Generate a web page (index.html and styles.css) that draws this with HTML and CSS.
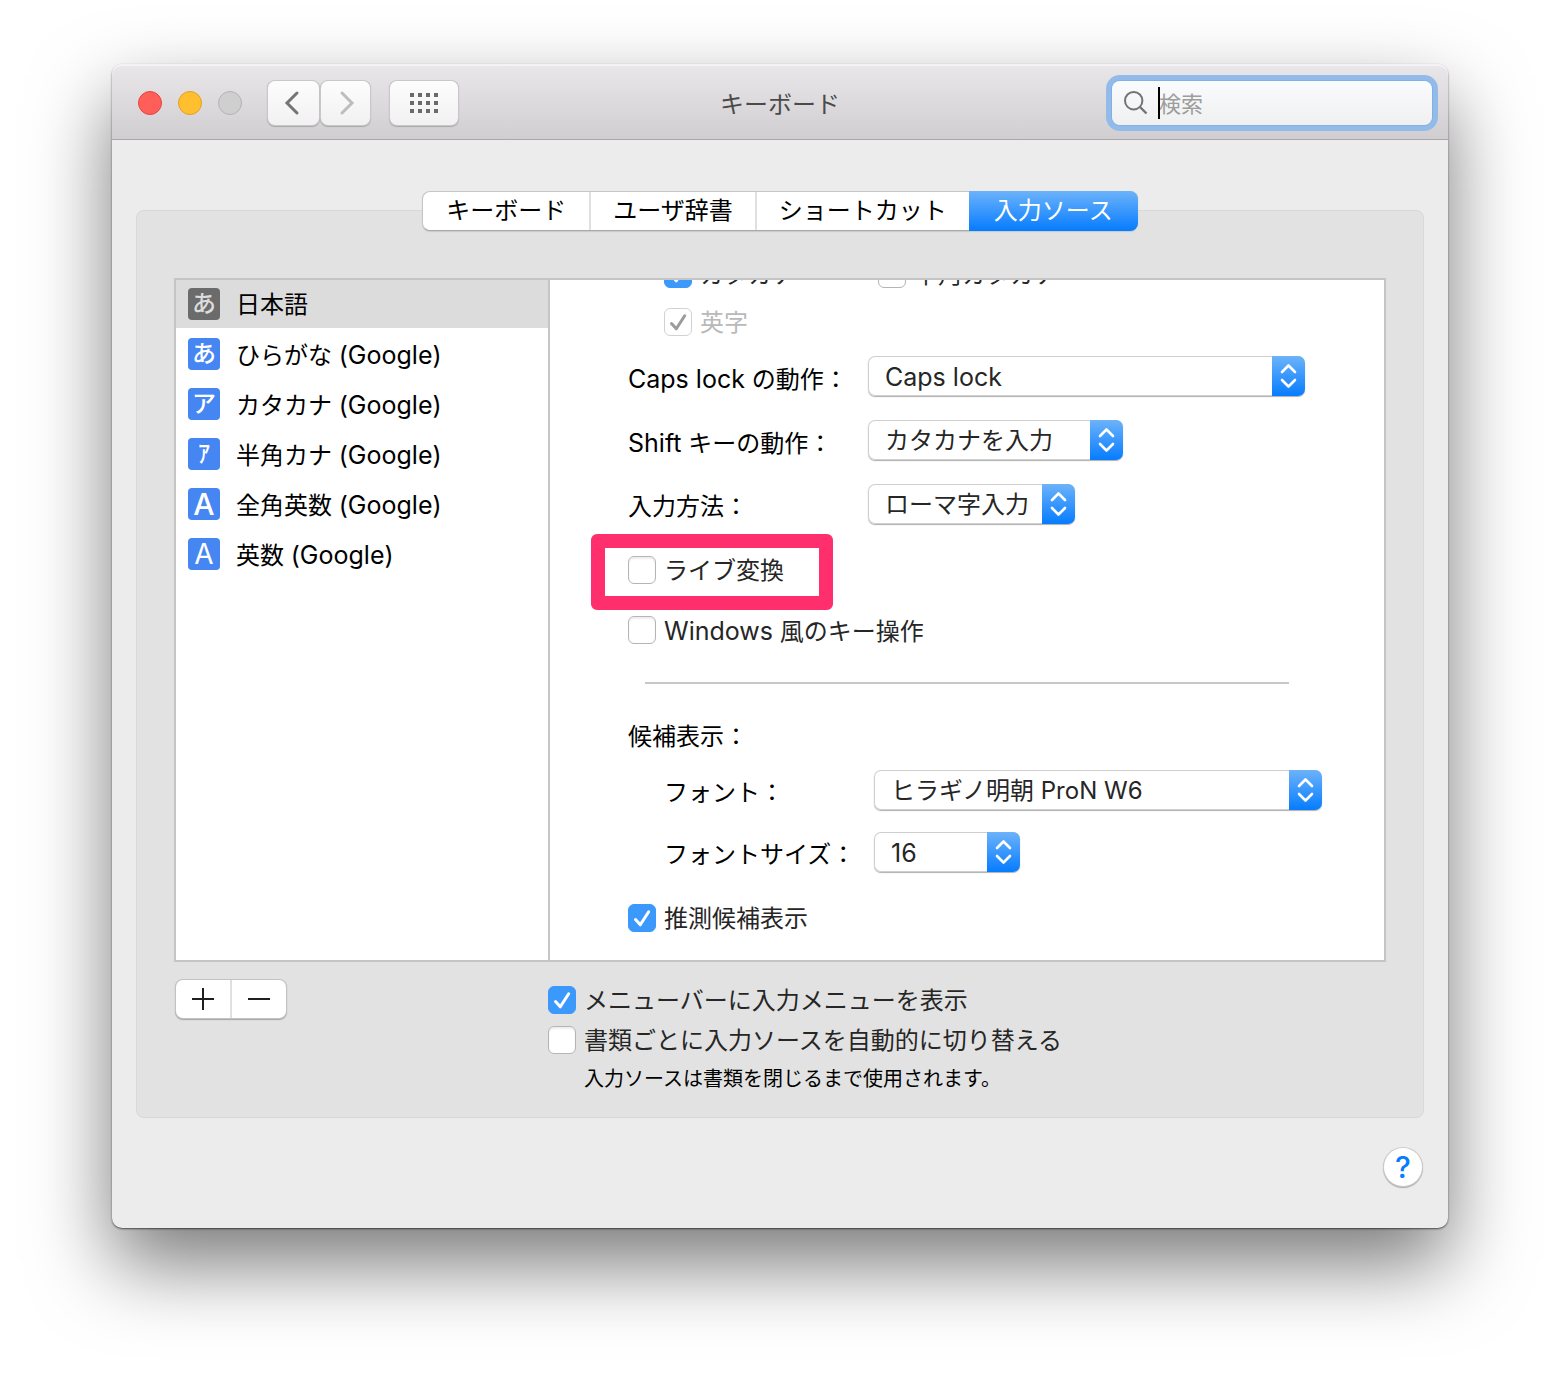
FILE: index.html
```html
<!DOCTYPE html>
<html lang="ja">
<head>
  <meta charset="UTF-8">
  <meta name="viewport" content="width=device-width, initial-scale=1.0">
  <title>キーボード</title>
  <link rel="stylesheet" href="styles.css">
</head>
<body>
  <svg class="defs" aria-hidden="true">
    <symbol id="tick" viewBox="0 0 28 28">
      <path d="M7.5 15.5 L12.3 20.8 L20.7 7.8" fill="none" stroke="currentColor" stroke-width="3" stroke-linecap="round" stroke-linejoin="round"/>
    </symbol>
    <symbol id="updown" viewBox="0 0 33 40">
      <path d="M10 16 L16.5 9.5 L23 16 M10 24 L16.5 30.5 L23 24" fill="none" stroke="currentColor" stroke-width="2.6" stroke-linecap="round" stroke-linejoin="round"/>
    </symbol>
  </svg>

  <div class="window">
    <header class="titlebar">
      <div class="tools">
        <div class="lights">
          <button class="light red" aria-label="閉じる"></button>
          <button class="light yellow" aria-label="しまう"></button>
          <button class="light gray" aria-label="拡大" disabled></button>
        </div>
        <div class="nav">
          <button class="tool back" aria-label="戻る">
            <svg width="16" height="26" viewBox="0 0 16 26"><path d="M13 3 L3 13 L13 23" fill="none" stroke="#757575" stroke-width="3" stroke-linecap="round"/></svg>
          </button>
          <button class="tool forward" aria-label="進む">
            <svg width="16" height="26" viewBox="0 0 16 26"><path d="M3 3 L13 13 L3 23" fill="none" stroke="#bdbdbd" stroke-width="3" stroke-linecap="round"/></svg>
          </button>
        </div>
        <button class="tool all" aria-label="すべてを表示">
          <svg width="28" height="20" viewBox="0 0 28 20" fill="#6b6b6b">
            <path d="M0 0h4v4H0z M8 0h4v4H8z M16 0h4v4h-4z M24 0h4v4h-4z M0 8h4v4H0z M8 8h4v4H8z M16 8h4v4h-4z M24 8h4v4h-4z M0 16h4v4H0z M8 16h4v4H8z M16 16h4v4h-4z M24 16h4v4h-4z"/>
          </svg>
        </button>
      </div>
      <h1 class="title">キーボード</h1>
      <div class="search">
        <svg width="24" height="24" viewBox="0 0 24 24"><circle cx="9.7" cy="9.7" r="8.7" fill="none" stroke="#737373" stroke-width="2"/><path d="M16 16 L22.5 22.5" stroke="#737373" stroke-width="2.4"/></svg>
        <input type="text" placeholder="検索" aria-label="検索">
        <span class="caret"></span>
      </div>
    </header>

    <main class="content">
      <nav class="tabs">
        <button class="tab">キーボード</button>
        <button class="tab">ユーザ辞書</button>
        <button class="tab">ショートカット</button>
        <button class="tab active">入力ソース</button>
      </nav>

      <section class="box">
        <div class="panel">
          <ul class="sources">
            <li class="source selected"><span class="badge bold">あ</span><span>日本語</span></li>
            <li class="source"><span class="badge bold">あ</span><span>ひらがな <span class="latin">(Google)</span></span></li>
            <li class="source"><span class="badge bold">ア</span><span>カタカナ <span class="latin">(Google)</span></span></li>
            <li class="source"><span class="badge bold">ｱ</span><span>半角カナ <span class="latin">(Google)</span></span></li>
            <li class="source"><span class="badge wide-a">A</span><span>全角英数 <span class="latin">(Google)</span></span></li>
            <li class="source"><span class="badge narrow-a">A</span><span>英数 <span class="latin">(Google)</span></span></li>
          </ul>

          <div class="detail">
            <div class="modes">
              <label class="check"><span class="tickbox"><input type="checkbox" checked><svg><use href="#tick"/></svg></span>カタカナ</label>
              <label class="check"><span class="tickbox"><input type="checkbox"><svg><use href="#tick"/></svg></span>半角カタカナ</label>
              <label class="check off"><span class="tickbox"><input type="checkbox" checked disabled><svg><use href="#tick"/></svg></span>英字</label>
            </div>

            <div class="fields">
              <div class="field">
                <label for="caps"><span class="latin">Caps lock</span> の動作：</label>
                <span class="popup w-caps"><select id="caps" class="latin"><option>Caps lock</option></select><svg><use href="#updown"/></svg></span>
              </div>
              <div class="field">
                <label for="shift"><span class="latin">Shift</span> キーの動作：</label>
                <span class="popup w-shift"><select id="shift"><option>カタカナを入力</option></select><svg><use href="#updown"/></svg></span>
              </div>
              <div class="field">
                <label for="method">入力方法：</label>
                <span class="popup w-method"><select id="method"><option>ローマ字入力</option></select><svg><use href="#updown"/></svg></span>
              </div>
            </div>

            <div class="options">
              <div class="marked">
                <label class="check"><span class="tickbox"><input type="checkbox"><svg><use href="#tick"/></svg></span>ライブ変換</label>
                <span class="marker"></span>
              </div>
              <label class="check"><span class="tickbox"><input type="checkbox"><svg><use href="#tick"/></svg></span><span><span class="latin">Windows</span> 風のキー操作</span></label>
            </div>

            <hr class="rule">

            <h2 class="heading">候補表示：</h2>
            <div class="fields indent">
              <div class="field">
                <label for="font">フォント：</label>
                <span class="popup w-font"><select id="font"><option>ヒラギノ明朝 ProN W6</option></select><svg><use href="#updown"/></svg></span>
              </div>
              <div class="field">
                <label for="size">フォントサイズ：</label>
                <span class="popup w-size"><select id="size" class="latin"><option>16</option></select><svg><use href="#updown"/></svg></span>
              </div>
            </div>

            <label class="check"><span class="tickbox"><input type="checkbox" checked><svg><use href="#tick"/></svg></span>推測候補表示</label>
          </div>
        </div>

        <div class="below">
          <div class="addremove">
            <button aria-label="追加"><svg width="24" height="24" viewBox="0 0 24 24"><path d="M1 12h22M12 1v22" stroke="#1f1f1f" stroke-width="2"/></svg></button>
            <button aria-label="削除"><svg width="24" height="24" viewBox="0 0 24 24"><path d="M1 12h22" stroke="#1f1f1f" stroke-width="2"/></svg></button>
          </div>
          <div class="menu-options">
            <label class="check"><span class="tickbox"><input type="checkbox" checked><svg><use href="#tick"/></svg></span>メニューバーに入力メニューを表示</label>
            <label class="check"><span class="tickbox"><input type="checkbox"><svg><use href="#tick"/></svg></span>書類ごとに入力ソースを自動的に切り替える</label>
            <p class="note">入力ソースは書類を閉じるまで使用されます。</p>
          </div>
        </div>
      </section>

      <button class="help">?</button>
    </main>
  </div>
</body>
</html>
```
FILE: styles.css
```css
* {
  box-sizing: border-box;
}
body {
  margin: 0;
  padding: 64px 112px 160px;
  background: #fff;
  color: #000;
  font-family: Inter, "Noto Sans CJK JP", sans-serif;
  font-size: 24px;
  line-height: 28px;
}
button, input, select {
  font: inherit;
  color: inherit;
  margin: 0;
  padding: 0;
  border: none;
  background: none;
}
h1, h2, p, ul {
  margin: 0;
  padding: 0;
  font-size: inherit;
  font-weight: normal;
}
svg {
  display: block;
}
.defs {
  display: none;
}
.latin {
  font-size: 25px;
}
.window {
  border-radius: 10px;
  background: #ececec;
  box-shadow: 0 1px 2px rgba(0, 0, 0, 0.6), 0 36px 80px rgba(0, 0, 0, 0.53);
}

/* title bar */
.titlebar {
  display: grid;
  grid-template-columns: 1fr auto 1fr;
  align-items: center;
  height: 76px;
  padding: 2px 16px 0;
  border-bottom: 1px solid #aaa6aa;
  border-radius: 10px 10px 0 0;
  background: linear-gradient(#e9e7ea, #d1ced2);
  box-shadow: inset 0 2px 0 #f3f2f4;
}
.tools, .lights, .nav {
  display: flex;
  align-items: center;
}
.lights {
  gap: 16px;
  margin: 0 26px 0 10px;
}
.light {
  width: 24px;
  height: 24px;
  border-radius: 50%;
}
.red {
  background: #ff5f58;
  border: 1px solid #e24640;
}
.yellow {
  background: #ffbf2f;
  border: 1px solid #dfa023;
}
.gray {
  background: #cfcfcf;
  border: 1px solid #b3b3b3;
}
.nav {
  gap: 2px;
  margin-right: 20px;
}
.tool {
  display: flex;
  align-items: center;
  justify-content: center;
  height: 44px;
  border-radius: 7px;
  background: linear-gradient(#fdfdfd, #f1f1f1);
  box-shadow: 0 0 0 1px #c9c7ca, 0 1px 1px 1px #a9a7aa;
}
.back {
  width: 51px;
  padding-right: 4px;
}
.forward {
  width: 49px;
  padding-left: 2px;
}
.all {
  width: 68px;
}
.title {
  padding-top: 4px;
  color: #4a4a4a;
}
.search {
  position: relative;
  justify-self: end;
  display: flex;
  align-items: center;
  gap: 11px;
  width: 320px;
  height: 44px;
  padding-left: 12px;
  border-radius: 8px;
  background: linear-gradient(#fafbfd, #f0f0f0);
  box-shadow: 0 0 0 1px #7fb0e6, 0 0 0 6px #93bbea;
}
.search input {
  flex: 1;
  min-width: 0;
  height: 44px;
  padding-top: 2px;
  outline: none;
  font-size: 22px;
}
.search input::placeholder {
  color: #9d9d9d;
}
.caret {
  position: absolute;
  left: 46px;
  top: 6px;
  width: 2px;
  height: 32px;
  background: #000;
}

/* tabs */
.content {
  padding: 51px 24px 42px;
}
.tabs {
  position: relative;
  display: flex;
  width: fit-content;
  height: 40px;
  margin: 0 auto -21px;
  border: 1px solid #c6c6c6;
  border-bottom-color: #a9a9a9;
  border-radius: 8px;
  background: #fff;
  box-shadow: 0 1px 1px #c9c9c9;
}
.tab {
  padding: 0 22px;
  border-right: 2px solid #e0e0e0;
}
.tab:first-child {
  padding: 0 23px;
}
.tab:nth-child(3) {
  border: none;
}
.tab.active {
  margin: -1px -1px -1px 0;
  padding: 0 25px;
  border: none;
  border-radius: 0 8px 8px 0;
  background: linear-gradient(#6cb3fa, #067cff);
  color: #fff;
}

/* group box */
.box {
  padding: 67px 37px 25px;
  border: 1px solid #d8d8d8;
  border-radius: 8px;
  background: #e2e2e2;
}
.panel {
  display: flex;
  border: 2px solid #c5c5c5;
  background: #fff;
}
.sources {
  width: 374px;
  border-right: 2px solid #c5c5c5;
  list-style: none;
}
.source {
  display: flex;
  align-items: flex-start;
  gap: 16px;
  height: 50px;
  padding: 10px 12px 0;
  line-height: 34px;
}
.selected {
  height: 48px;
  padding-top: 8px;
  background: #dcdcdc;
}
.badge {
  width: 32px;
  height: 32px;
  border-radius: 4px;
  background: #4586f3;
  color: #fff;
  line-height: 32px;
  text-align: center;
}
.selected .badge {
  background: #6b6b6b;
  color: #dcdcdc;
}
.bold {
  font-weight: 500;
}
.wide-a {
  font-size: 30px;
  font-weight: 500;
}
.narrow-a {
  font-size: 28px;
}

/* settings of the selected source */
.detail {
  flex: 1;
  min-width: 0;
  padding: 0 62px 28px 78px;
  overflow: hidden;
}
.check {
  display: flex;
  align-items: flex-start;
  gap: 8px;
  height: 28px;
  color: #262626;
  line-height: 30px;
}
.off {
  color: #b9b9b9;
}
.tickbox {
  position: relative;
  width: 28px;
  height: 28px;
}
.tickbox input {
  display: block;
  appearance: none;
  width: 28px;
  height: 28px;
  border: 1px solid #b5b5b5;
  border-radius: 6px;
  background: #fff;
  box-shadow: inset 0 2px 2px #eee;
}
.tickbox input:checked {
  border-color: #3b99fc;
  background: #3b99fc;
  box-shadow: none;
}
.tickbox input:disabled {
  border-color: #d2d2d2;
  background: #fff;
}
.tickbox svg {
  position: absolute;
  inset: 0;
  width: 28px;
  height: 28px;
  color: #fff;
  pointer-events: none;
}
.off svg {
  color: #9b9b9b;
}
.tickbox input:not(:checked) + svg {
  display: none;
}
.modes {
  display: grid;
  grid-template-columns: 214px 1fr;
  row-gap: 20px;
  margin: -20px 0 20px;
  padding-left: 36px;
}
.fields {
  display: flex;
  flex-direction: column;
  gap: 24px;
  margin-bottom: 32px;
}
.field {
  display: flex;
  align-items: center;
}
.field label {
  width: 240px;
  padding-top: 6px;
  white-space: nowrap;
}
.indent {
  gap: 22px;
  padding-left: 36px;
}
.indent label {
  width: 210px;
}
.popup {
  position: relative;
  height: 40px;
}
.popup select {
  appearance: none;
  width: 100%;
  height: 40px;
  padding: 2px 40px 0 17px;
  border-radius: 7px;
  background: #fff;
  box-shadow: inset 0 0 0 1px #cfcfcf, 0 1px 1px #b0b0b0;
  color: #262626;
}
.popup svg {
  position: absolute;
  top: 0;
  right: 0;
  width: 33px;
  height: 40px;
  border-radius: 0 7px 7px 0;
  background: linear-gradient(#6cb3fa, #067cff);
  color: #fff;
  pointer-events: none;
}
.w-caps {
  width: 437px;
}
.w-shift {
  width: 255px;
}
.w-method {
  width: 207px;
}
.w-font {
  width: 448px;
}
.w-size {
  width: 146px;
}
.options {
  display: flex;
  flex-direction: column;
  gap: 32px;
}
.marked {
  position: relative;
}
/* pink frame round the option to switch off */
.marker {
  position: absolute;
  left: -37px;
  top: -22px;
  width: 242px;
  height: 76px;
  border: 14px solid #ff2e6c;
  border-radius: 6px;
  pointer-events: none;
}
.rule {
  height: 2px;
  margin: 38px 33px 39px 17px;
  border: none;
  background: #c8c8c8;
}
.heading {
  margin-bottom: 19px;
}

/* under the panel */
.below {
  display: flex;
  padding-top: 18px;
}
.addremove {
  display: flex;
  width: 110px;
  height: 38px;
  margin: 0 262px 0 2px;
  border-radius: 7px;
  background: #fff;
  box-shadow: 0 0 0 1px #c2c2c2, 0 1px 1px 1px #a6a6a6;
}
.addremove button {
  display: flex;
  flex: 1;
  align-items: center;
  justify-content: center;
}
.addremove button + button {
  border-left: 2px solid #e0e0e0;
}
.menu-options {
  display: flex;
  flex-direction: column;
  gap: 12px;
  padding-top: 6px;
}
.note {
  padding-left: 36px;
  font-size: 20px;
  line-height: 26px;
}
.help {
  display: block;
  width: 38px;
  height: 38px;
  margin: 30px 2px 0 auto;
  border-radius: 50%;
  background: #fff;
  box-shadow: 0 0 0 1px #cdcdcd, 0 1px 1px 1px #a9a9a9;
  color: #067cff;
  font-size: 30px;
  font-weight: 500;
}
```
